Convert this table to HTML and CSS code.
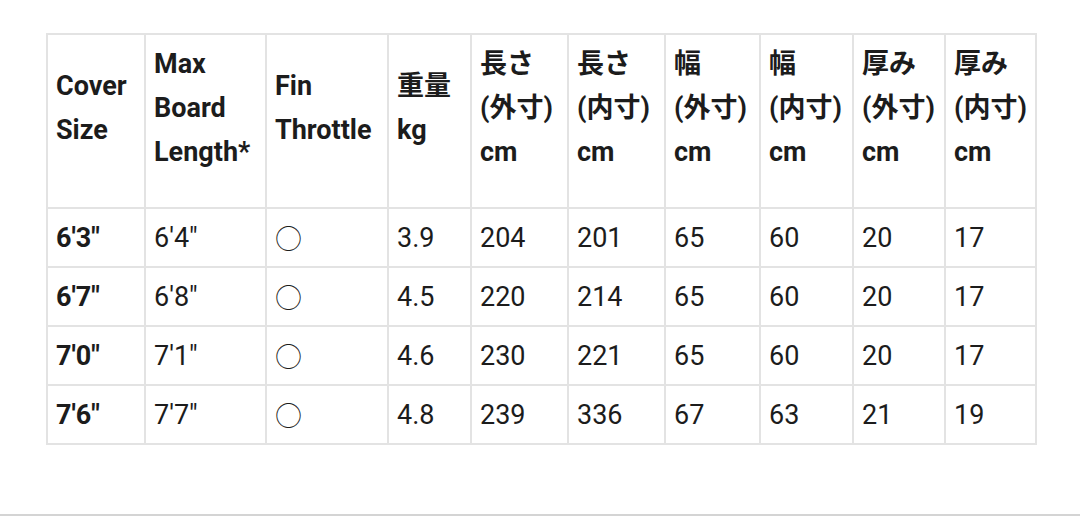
FILE: index.html
```html
<!DOCTYPE html>
<html lang="ja">
<head>
<meta charset="utf-8">
<link rel="stylesheet" href="styles.css">
</head>
<body>
<div class="page">
  <div class="wrap">
    <table class="spec">
      <thead>
        <tr>
          <th>Cover<br>Size</th>
          <th>Max<br>Board<br>Length*</th>
          <th>Fin<br>Throttle</th>
          <th>重量<br>kg</th>
          <th>長さ<br>(外寸)<br>cm</th>
          <th>長さ<br>(内寸)<br>cm</th>
          <th>幅<br>(外寸)<br>cm</th>
          <th>幅<br>(内寸)<br>cm</th>
          <th>厚み<br>(外寸)<br>cm</th>
          <th>厚み<br>(内寸)<br>cm</th>
        </tr>
      </thead>
      <tbody>
        <tr><td class="size">6'3"</td><td>6'4"</td><td class="mark">○</td><td>3.9</td><td>204</td><td>201</td><td>65</td><td>60</td><td>20</td><td>17</td></tr>
        <tr><td class="size">6'7"</td><td>6'8"</td><td class="mark">○</td><td>4.5</td><td>220</td><td>214</td><td>65</td><td>60</td><td>20</td><td>17</td></tr>
        <tr><td class="size">7'0"</td><td>7'1"</td><td class="mark">○</td><td>4.6</td><td>230</td><td>221</td><td>65</td><td>60</td><td>20</td><td>17</td></tr>
        <tr><td class="size">7'6"</td><td>7'7"</td><td class="mark">○</td><td>4.8</td><td>239</td><td>336</td><td>67</td><td>63</td><td>21</td><td>19</td></tr>
      </tbody>
    </table>
  </div>
  <div class="rule"></div>
</div>
</body>
</html>
```

FILE: styles.css
```css
html, body {
  margin: 0;
  padding: 0;
  background: #ffffff;
}

.page {
  height: 516px;
  display: flex;
  flex-direction: column;
  font-family: Roboto, "Noto Sans CJK JP", sans-serif;
  color: #1c1c1c;
}

.wrap {
  padding: 33px 0 0 46px;
}

.spec {
  border-collapse: collapse;
  table-layout: fixed;
  width: 991px;
  font-size: 27px;
  line-height: 44px;
}

.spec th,
.spec td {
  box-sizing: border-box;
  border: 2px solid #e3e3e3;
  text-align: left;
  padding: 7px 8px 6px;
  white-space: nowrap;
  overflow: hidden;
  vertical-align: middle;
}

.spec th {
  font-weight: 700;
  padding-top: 7px;
  padding-bottom: 33px;
}

.spec td {
  font-weight: 400;
}

.spec td.size {
  font-weight: 700;
}

.spec td.mark {
  font-family: "Noto Sans CJK JP", sans-serif;
  font-size: 27px;
  font-weight: 300;
}

.spec th:nth-child(1) { width: 98px; }
.spec th:nth-child(2) { width: 121px; }
.spec th:nth-child(3) { width: 122px; }
.spec th:nth-child(4) { width: 83px; }
.spec th:nth-child(5) { width: 97px; }
.spec th:nth-child(6) { width: 97px; }
.spec th:nth-child(7) { width: 95px; }
.spec th:nth-child(8) { width: 93px; }
.spec th:nth-child(9) { width: 92px; }
.spec th:nth-child(10) { width: 91px; }

.rule {
  margin-top: auto;
  height: 2px;
  background: #d4d4d4;
}
```
